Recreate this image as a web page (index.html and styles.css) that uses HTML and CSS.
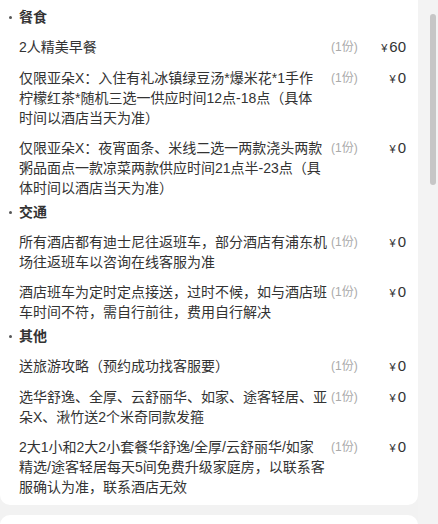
FILE: index.html
```html
<!DOCTYPE html>
<html lang="zh-CN">
<head>
<meta charset="utf-8">
<title>套餐内容</title>
<link rel="stylesheet" href="styles.css">
</head>
<body>
<div class="page">
  <div class="main">
    <div class="card">
      <div class="section">
        <div class="heading"><span class="dot"></span><span>餐食</span></div>
        <div class="item">
          <div class="text">2人精美早餐</div>
          <div class="qty">(1份)</div>
          <div class="price"><span class="yen">¥</span>60</div>
        </div>
        <div class="item">
          <div class="text">仅限亚朵X：入住有礼冰镇绿豆汤*爆米花*1手作<br>柠檬红茶*随机三选一供应时间12点-18点（具体<br>时间以酒店当天为准）</div>
          <div class="qty">(1份)</div>
          <div class="price"><span class="yen">¥</span>0</div>
        </div>
        <div class="item">
          <div class="text">仅限亚朵X：夜宵面条、米线二选一两款浇头两款<br>粥品面点一款凉菜两款供应时间21点半-23点（具<br>体时间以酒店当天为准）</div>
          <div class="qty">(1份)</div>
          <div class="price"><span class="yen">¥</span>0</div>
        </div>
      </div>
      <div class="section">
        <div class="heading"><span class="dot"></span><span>交通</span></div>
        <div class="item">
          <div class="text">所有酒店都有迪士尼往返班车，部分酒店有浦东机<br>场往返班车以咨询在线客服为准</div>
          <div class="qty">(1份)</div>
          <div class="price"><span class="yen">¥</span>0</div>
        </div>
        <div class="item">
          <div class="text">酒店班车为定时定点接送，过时不候，如与酒店班<br>车时间不符，需自行前往，费用自行解决</div>
          <div class="qty">(1份)</div>
          <div class="price"><span class="yen">¥</span>0</div>
        </div>
      </div>
      <div class="section">
        <div class="heading"><span class="dot"></span><span>其他</span></div>
        <div class="item">
          <div class="text">送旅游攻略（预约成功找客服要）</div>
          <div class="qty">(1份)</div>
          <div class="price"><span class="yen">¥</span>0</div>
        </div>
        <div class="item">
          <div class="text">选华舒逸、全厚、云舒丽华、如家、途客轻居、亚<br>朵X、湫竹送2个米奇同款发箍</div>
          <div class="qty">(1份)</div>
          <div class="price"><span class="yen">¥</span>0</div>
        </div>
        <div class="item">
          <div class="text">2大1小和2大2小套餐华舒逸/全厚/云舒丽华/如家<br>精选/途客轻居每天5间免费升级家庭房，以联系客<br>服确认为准，联系酒店无效</div>
          <div class="qty">(1份)</div>
          <div class="price"><span class="yen">¥</span>0</div>
        </div>
      </div>
    </div>
    <div class="card next"></div>
  </div>
  <div class="scrollbar"><div class="thumb"></div></div>
</div>
</body>
</html>
```

FILE: styles.css
```css
html, body {
  margin: 0;
  padding: 0;
  height: 100%;
  overflow: hidden;
  background: #f2f2f2;
  font-family: "Liberation Sans", "Noto Sans CJK SC", sans-serif;
  color: #333;
}

.page {
  display: flex;
  height: 524px;
  overflow: hidden;
}

.main {
  width: 418px;
  display: flex;
  flex-direction: column;
  gap: 10px;
}

.card {
  background: #fff;
  border-radius: 0 0 10px 10px;
  padding: 7px 12px 8px 19px;
  display: flex;
  flex-direction: column;
  gap: 4px;
}

.card.next {
  border-radius: 10px 10px 0 0;
  height: 60px;
  flex-shrink: 0;
  padding: 0;
}

.section {
  display: flex;
  flex-direction: column;
  gap: 10px;
}

.heading {
  display: flex;
  align-items: center;
  margin-left: -10px;
  font-size: 14px;
  font-weight: bold;
  line-height: 20px;
  color: #333;
}

.dot {
  width: 3px;
  height: 3px;
  border-radius: 50%;
  background: #555;
  margin-right: 7px;
}

.item {
  display: flex;
  align-items: flex-start;
}

.text {
  width: 310px;
  flex-shrink: 0;
  font-size: 14px;
  line-height: 20px;
  white-space: nowrap;
  color: #333;
}

.qty {
  margin-left: 2px;
  width: 26px;
  font-size: 12px;
  line-height: 20px;
  color: #aaa;
  white-space: nowrap;
}

.price {
  width: 49px;
  text-align: right;
  font-size: 15px;
  line-height: 20px;
  color: #333;
  white-space: nowrap;
}

.yen {
  font-size: 11px;
  margin-right: 2px;
}

.scrollbar {
  width: 20px;
  padding: 14px 2px 0 12px;
  box-sizing: border-box;
  background: #f3f3f3;
}

.thumb {
  width: 6px;
  height: 171px;
  border-radius: 3px;
  background: #c6c6c6;
}
```
